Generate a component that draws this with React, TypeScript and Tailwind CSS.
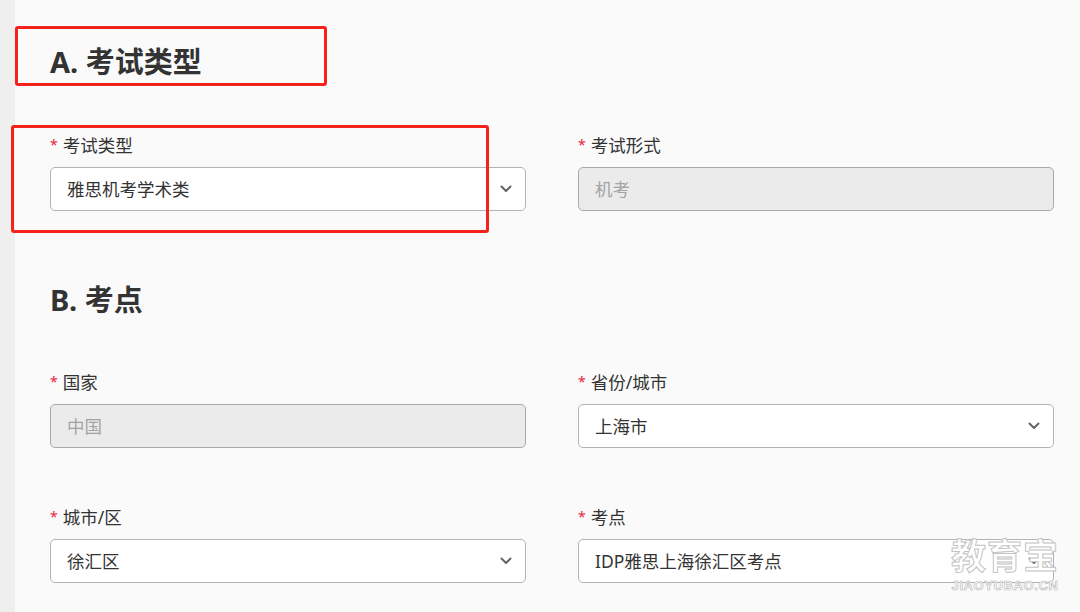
import React from 'react';

const font = "font-['Noto_Sans','Noto_Sans_CJK_SC',sans-serif]";

const Chevron: React.FC = () => (
  <svg width="12" height="8" viewBox="0 0 12 8" className="shrink-0">
    <path d="M1.5 1.5 L6 6 L10.5 1.5" fill="none" stroke="#666" strokeWidth="2" strokeLinecap="round" strokeLinejoin="round" />
  </svg>
);

type FieldProps = {
  label: string;
  value: string;
  disabled?: boolean;
  select?: boolean;
};

const Field: React.FC<FieldProps> = ({ label, value, disabled, select }) => (
  <div className="flex flex-col">
    <div className="flex items-center h-[24px] text-[17.5px] text-[#333]">
      <span className="text-[#e5243f] text-[14px] mr-[5px] leading-none">*</span>
      {label}
    </div>
    <div
      className={`mt-[10px] h-[44px] rounded-[5px] border flex items-center justify-between pl-[16px] pr-[13px] text-[17.5px] ${
        disabled ? 'bg-[#ebebeb] border-[#a9a9a9] text-[#a3a3a3]' : 'bg-white border-[#b3b3b3] text-[#333]'
      }`}
    >
      <span>{value}</span>
      {select && <Chevron />}
    </div>
  </div>
);

export default function App() {
  return (
    <div className={`${font} w-[1080px] h-[612px] overflow-hidden bg-[#efefef] flex`}>
      <div className="w-[15px] shrink-0" />
      <div className="relative flex-1 bg-[#fafafa] pl-[35px] pr-[26px]">
        <div className="pt-[40px]">
          <h2 className="text-[29px] font-bold text-[#333] leading-[44px]">A. 考试类型</h2>
        </div>

        <div className="mt-[49px] grid grid-cols-2 gap-x-[52px]">
          <Field label="考试类型" value="雅思机考学术类" select />
          <Field label="考试形式" value="机考" disabled />
        </div>

        <div className="mt-[67px]">
          <h2 className="text-[29px] font-bold text-[#333] leading-[44px]">B. 考点</h2>
        </div>

        <div className="mt-[48px] grid grid-cols-2 gap-x-[52px] gap-y-[57px]">
          <Field label="国家" value="中国" disabled />
          <Field label="省份/城市" value="上海市" select />
          <Field label="城市/区" value="徐汇区" select />
          <Field label="考点" value="IDP雅思上海徐汇区考点" select />
        </div>

        {/* annotation boxes */}
        <div className="absolute left-0 top-[26px] w-[312px] h-[60px] border-[3px] border-[#f5221b] rounded-[3px]" />
        <div className="absolute left-[-4px] top-[125px] w-[478px] h-[108px] border-[3px] border-[#f5221b] rounded-[3px]" />

        {/* watermark */}
        <div className="absolute left-[935px] top-[536px] w-[110px] flex flex-col items-center">
          <span className="text-[35px] leading-[40px] font-bold text-white [-webkit-text-stroke:1px_#c4c4c4] tracking-[1px]">教育宝</span>
          <span className="mt-[3px] text-[13px] leading-[14px] font-bold text-white [-webkit-text-stroke:0.6px_#b5b5b5] tracking-[0.6px] font-['Liberation_Sans',sans-serif]">JIAOYUBAO.CN</span>
        </div>
      </div>
    </div>
  );
}
